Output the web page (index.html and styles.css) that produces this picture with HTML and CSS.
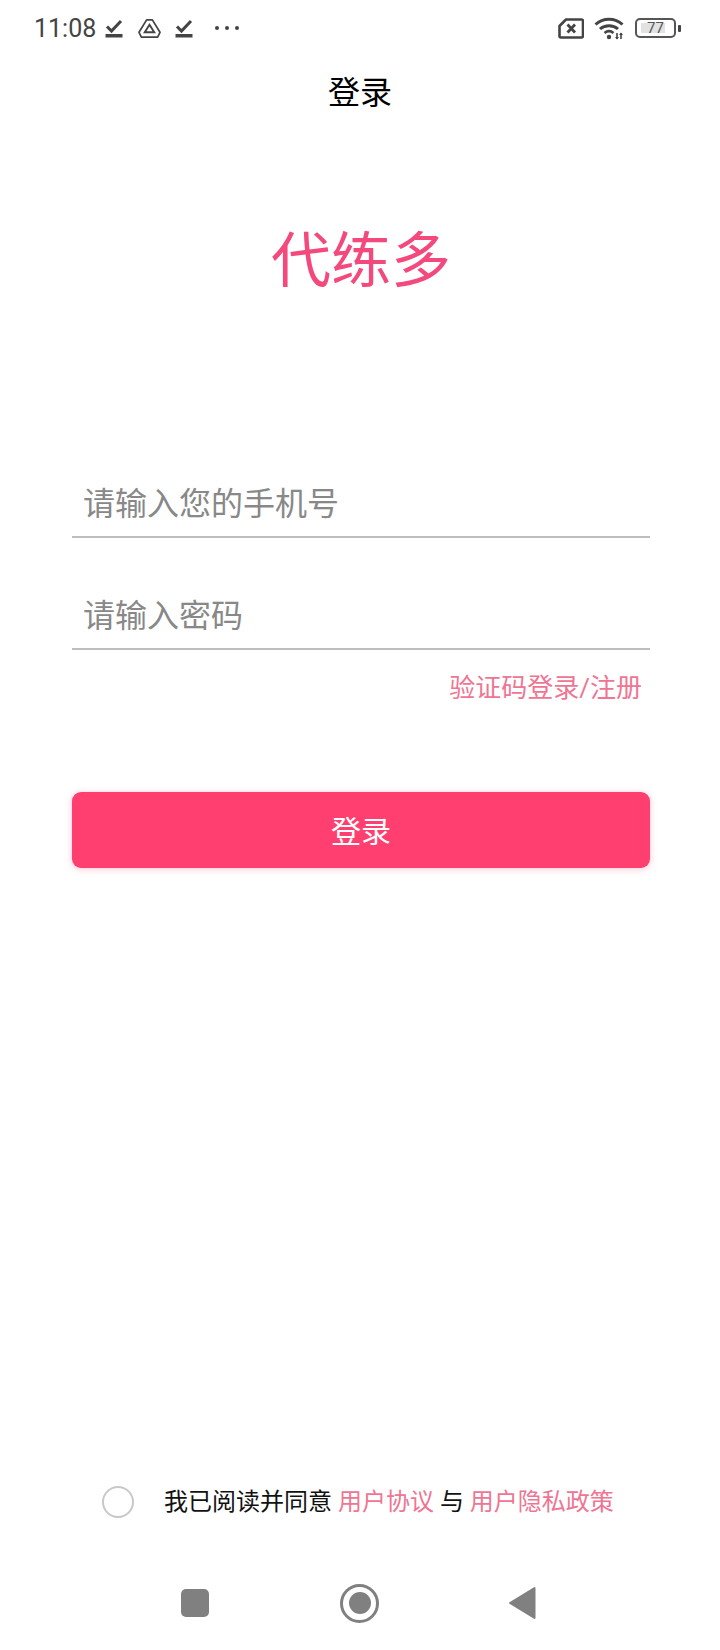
FILE: index.html
```html
<!DOCTYPE html>
<html lang="zh">
<head>
<meta charset="utf-8">
<title>登录</title>
<link rel="stylesheet" href="styles.css">
</head>
<body>
<div class="screen">
  <div class="status">
    <div class="status-left">
      <span class="time">11:08</span>
      <svg class="ic-check" viewBox="0 0 18 20"><path d="M2 8.500l4.500 4.500L16 3" fill="none" stroke="#444" stroke-width="3"/><rect x="0.500" y="16" width="17" height="3.500" fill="#444"/></svg>
      <svg class="ic-tri" viewBox="0 0 24 22"><path d="M9 2h6l8 13-2.500 5H3.500L1 15z" fill="none" stroke="#444" stroke-width="1.800" stroke-linejoin="round"/><path d="M12 7l5 8H7z" fill="none" stroke="#444" stroke-width="2"/></svg>
      <svg class="ic-check second" viewBox="0 0 18 20"><path d="M2 8.500l4.500 4.500L16 3" fill="none" stroke="#444" stroke-width="3"/><rect x="0.500" y="16" width="17" height="3.500" fill="#444"/></svg>
      <span class="dots"><i></i><i></i><i></i></span>
    </div>
    <div class="status-right">
      <svg class="ic-sim" viewBox="0 0 26 21"><path d="M8 1.500h15.500a1.500 1.500 0 0 1 1.500 1.500v15a1.500 1.500 0 0 1-1.500 1.500H3a1.500 1.500 0 0 1-1.500-1.500V8z" fill="none" stroke="#444" stroke-width="2.600" stroke-linejoin="round"/><path d="M9.500 6.500l7.500 8M17 6.500l-7.500 8" stroke="#444" stroke-width="2.800"/></svg>
      <svg class="ic-wifi" viewBox="0 0 30 24"><path d="M1.500 8.500C9 1.500 21 1.500 28.500 8.500" fill="none" stroke="#444" stroke-width="3"/><path d="M6 13c5-4.500 13-4.500 18 0" fill="none" stroke="#444" stroke-width="3"/><path d="M10.500 17c2.700-2.200 6.300-2.200 9 0" fill="none" stroke="#444" stroke-width="2.600"/><circle cx="15" cy="21" r="2.200" fill="#444"/><path d="M23 17v6M27 17v6" stroke="#444" stroke-width="1.600"/><path d="M21 21l2 2.500 2-2.500zM25 19l2-2.500 2 2.500z" fill="#444"/></svg>
      <div class="battery">
        <div class="batt-body"><span class="batt-level"></span><span class="batt-num">77</span></div>
        <span class="batt-cap"></span>
      </div>
    </div>
  </div>

  <div class="title">登录</div>
  <div class="brand">代练多</div>

  <form class="form">
    <div class="field first"><span>请输入您的手机号</span></div>
    <div class="field"><span>请输入密码</span></div>
    <div class="switch">验证码登录/注册</div>
    <div class="btn">登录</div>
  </form>

  <div class="spacer"></div>

  <div class="agree">
    <span class="radio"></span>
    <span class="agree-text">我已阅读并同意 <a>用户协议</a> 与 <a>用户隐私政策</a></span>
  </div>

  <div class="nav">
    <span class="nav-square"></span>
    <span class="nav-circle"><i></i></span>
    <svg class="nav-back" viewBox="0 0 28 34"><path d="M26.500 2v30L2 17z" fill="#808080" stroke="#808080" stroke-width="2" stroke-linejoin="round"/></svg>
  </div>
</div>
</body>
</html>
```

FILE: styles.css
```css
* { box-sizing: border-box; }
html, body { margin: 0; padding: 0; background: #fff; }
body { font-family: "Roboto", "Noto Sans CJK SC", sans-serif; }
.screen { width: 720px; height: 1650px; display: flex; flex-direction: column; overflow: hidden; }

.status { height: 56px; padding: 0 39px 0 34px; display: flex; justify-content: space-between; align-items: center; }
.status-left, .status-right { display: flex; align-items: center; }
.time { font-size: 25px; color: #444; line-height: 60px; padding-top: 2px; }
.ic-check { width: 18px; height: 20px; margin-left: 9px; }
.ic-check.second { margin-left: 14px; }
.ic-tri { width: 23px; height: 21px; margin-left: 15px; }
.dots { display: flex; gap: 6px; margin-left: 22px; }
.dots i { width: 4px; height: 4px; border-radius: 50%; background: #444; }
.ic-sim { width: 26px; height: 21px; }
.ic-wifi { width: 30px; height: 24px; margin-left: 10px; }
.battery { display: flex; align-items: center; margin-left: 11px; }
.batt-body { position: relative; width: 41px; height: 20px; border: 2px solid #555; border-radius: 5px; padding: 3px 4px; }
.batt-level { display: block; width: 24px; height: 100%; background: #e2e2e2; }
.batt-num { position: absolute; inset: 0; font-size: 15px; line-height: 16px; text-align: center; color: #555; }
.batt-cap { width: 3px; height: 7px; margin-left: 2px; background: #444; border-radius: 1px; }

.title { height: 72px; margin-top: 1px; text-align: center; font-size: 32px; line-height: 72px; color: #000; }
.brand { margin-top: 87px; padding-left: 2px; height: 92px; text-align: center; font-size: 60px; line-height: 92px; color: #f4497c; }

.form { margin: 0 70px 0 72px; }
.field { height: 112px; border-bottom: 2px solid #bdbdbd; padding: 0 12px 10px 11px; display: flex; align-items: flex-end; font-size: 32px; line-height: 44px; color: #888; }
.field.first { margin-top: 174px; height: auto; }
.switch { margin-top: 18px; padding-right: 8px; text-align: right; font-size: 26px; line-height: 40px; color: #ef7593; }
.btn { margin-top: 84px; padding-top: 3px; height: 76px; border-radius: 9px; background: #ff3f70; box-shadow: 0 1px 7px rgba(255, 63, 112, .3); color: #fff; text-align: center; font-size: 30px; line-height: 73px; }

.spacer { flex: 1; }

.agree { display: flex; align-items: center; height: 40px; padding-left: 102px; margin-bottom: 36px; }
.radio { width: 32px; height: 32px; border: 2px solid #c8c8cc; border-radius: 50%; }
.agree-text { margin-left: 30px; font-size: 24px; line-height: 40px; color: #111; white-space: pre-wrap; }
.agree-text a { color: #ef7593; }

.nav { height: 92px; padding: 0 0 2px 181px; display: flex; align-items: center; }
.nav-square { width: 28px; height: 28px; border-radius: 5px; background: #808080; }
.nav-circle { width: 39px; height: 39px; margin-left: 131px; border: 3px solid #808080; border-radius: 50%; display: flex; align-items: center; justify-content: center; }
.nav-circle i { width: 22px; height: 22px; border-radius: 50%; background: #808080; }
.nav-back { width: 28px; height: 34px; margin-left: 129px; }
```
